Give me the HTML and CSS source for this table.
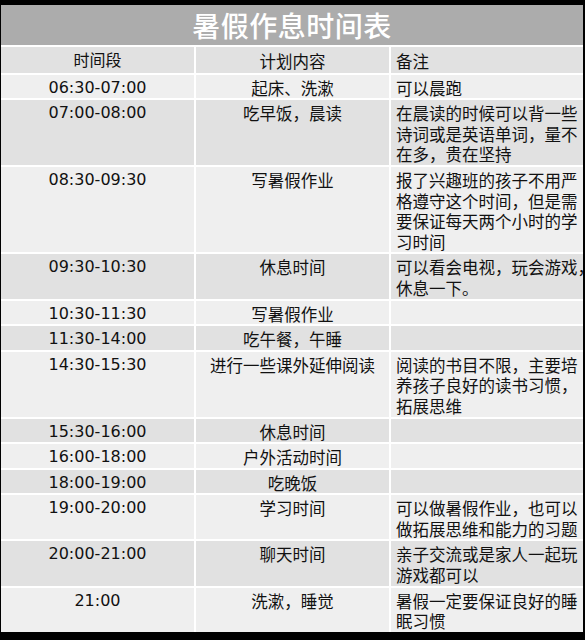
FILE: index.html
```html
<!DOCTYPE html>
<html lang="zh">
<head>
<meta charset="utf-8">
<title>暑假作息时间表</title>
<link rel="stylesheet" href="styles.css">
</head>
<body>
<div class="sheet">
  <div class="title">暑假作息时间表</div>
  <table class="schedule">
    <colgroup><col class="c1"><col class="c2"><col class="c3"></colgroup>
    <tr class="dark head"><td class="t">时间段</td><td class="p">计划内容</td><td class="r">备注</td></tr>
    <tr class="light"><td class="t">06:30-07:00</td><td class="p">起床、洗漱</td><td class="r">可以晨跑</td></tr>
    <tr class="dark"><td class="t">07:00-08:00</td><td class="p">吃早饭，晨读</td><td class="r">在晨读的时候可以背一些<br>诗词或是英语单词，量不<br>在多，贵在坚持</td></tr>
    <tr class="light"><td class="t">08:30-09:30</td><td class="p">写暑假作业</td><td class="r">报了兴趣班的孩子不用严<br>格遵守这个时间，但是需<br>要保证每天两个小时的学<br>习时间</td></tr>
    <tr class="dark"><td class="t">09:30-10:30</td><td class="p">休息时间</td><td class="r">可以看会电视，玩会游戏，<br>休息一下。</td></tr>
    <tr class="light"><td class="t">10:30-11:30</td><td class="p">写暑假作业</td><td class="r"></td></tr>
    <tr class="dark"><td class="t">11:30-14:00</td><td class="p">吃午餐，午睡</td><td class="r"></td></tr>
    <tr class="light"><td class="t">14:30-15:30</td><td class="p">进行一些课外延伸阅读</td><td class="r">阅读的书目不限，主要培<br>养孩子良好的读书习惯，<br>拓展思维</td></tr>
    <tr class="dark"><td class="t">15:30-16:00</td><td class="p">休息时间</td><td class="r"></td></tr>
    <tr class="light"><td class="t">16:00-18:00</td><td class="p">户外活动时间</td><td class="r"></td></tr>
    <tr class="dark"><td class="t">18:00-19:00</td><td class="p">吃晚饭</td><td class="r"></td></tr>
    <tr class="light"><td class="t">19:00-20:00</td><td class="p">学习时间</td><td class="r">可以做暑假作业，也可以<br>做拓展思维和能力的习题</td></tr>
    <tr class="dark"><td class="t">20:00-21:00</td><td class="p">聊天时间</td><td class="r">亲子交流或是家人一起玩<br>游戏都可以</td></tr>
    <tr class="light"><td class="t">21:00</td><td class="p">洗漱，睡觉</td><td class="r">暑假一定要保证良好的睡<br>眠习惯</td></tr>
  </table>
</div>
</body>
</html>
```
FILE: styles.css
```css
html, body {
  margin: 0;
  padding: 0;
  background: #000;
  height: 640px;
  overflow: hidden;
}
.sheet {
  margin: 5px 0 0 1px;
  width: 582px;
  background: #fff;
}
.title {
  height: 40px;
  background: #acacac;
  color: #fff;
  font-family: "Noto Sans CJK SC", sans-serif;
  font-size: 28px;
  font-weight: 500;
  line-height: 40px;
  text-align: center;
  letter-spacing: 0.5px;
  border-bottom: 2px solid #fff;
}
.schedule {
  width: 582px;
  border-collapse: collapse;
  table-layout: fixed;
  font-family: "DejaVu Sans", "Noto Sans CJK SC", sans-serif;
  color: #111;
}
.c1 { width: 194px; }
.c2 { width: 195px; }
.c3 { width: 193px; }
.schedule td {
  border: 2px solid #fff;
  padding: 3px 0 0;
  line-height: 20.6px;
  vertical-align: top;
  white-space: nowrap;
  font-size: 16.5px;
}
.schedule tr.head td { padding: 4px 0 1px; }
.schedule tr.head td.r { padding-left: 5px; }
.schedule tr:first-child td { border-top: 0; }
.schedule td:first-child { border-left: 0; }
.schedule td:last-child { border-right: 0; }
.schedule tr:last-child td { border-bottom: 0; }
.schedule td.t {
  text-align: center;
  font-size: 16px;
}
.schedule td.p {
  text-align: center;
  font-family: "Noto Sans CJK SC", sans-serif;
}
.schedule td.r {
  text-align: left;
  padding-left: 5px;
  font-family: "Noto Sans CJK SC", sans-serif;
  overflow: hidden;
}
.dark td { background: #e1e1e1; }
.light td { background: #efefef; }
```
